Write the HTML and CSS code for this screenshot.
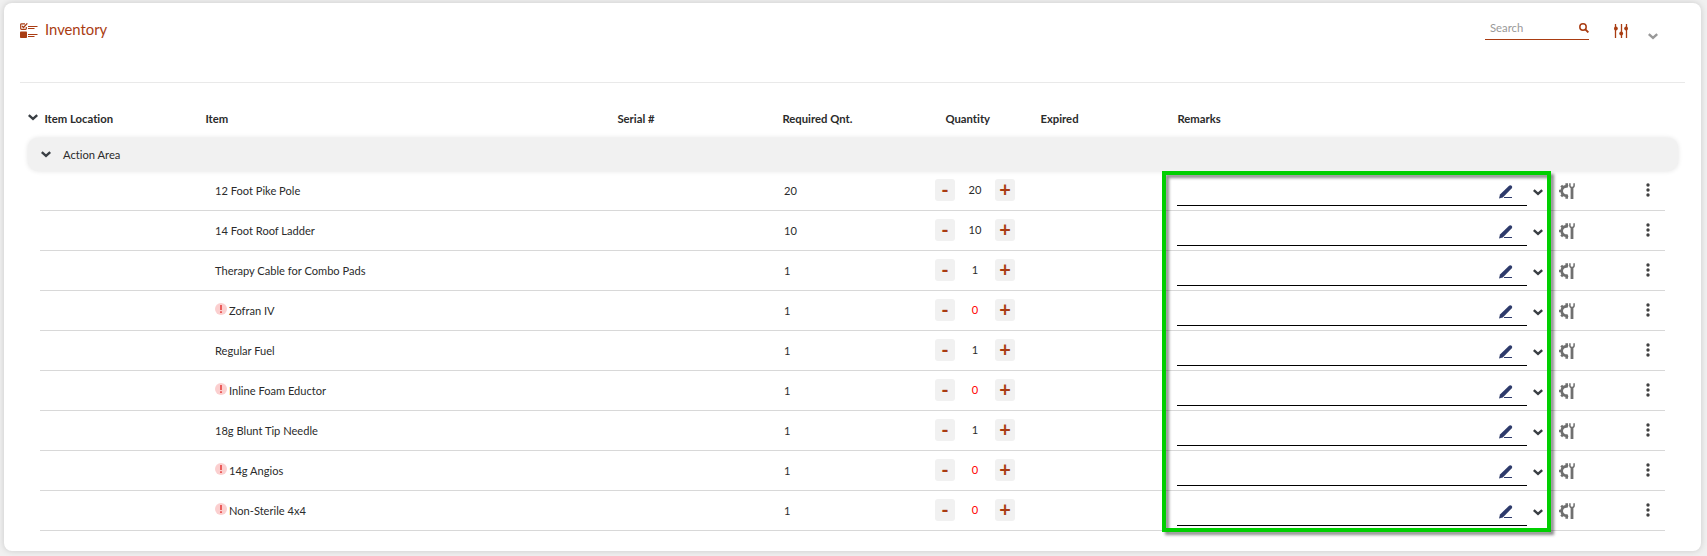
FILE: index.html
```html
<!DOCTYPE html>
<html lang="en">
<head>
<meta charset="utf-8">
<title>Inventory</title>
<link rel="stylesheet" href="styles.css">
</head>
<body>
<svg class="defs" aria-hidden="true">
  <symbol id="chevron" viewBox="0 0 10 7"><path d="M.8 1.200 5 5l4.200-3.800" fill="none" stroke="currentColor" stroke-width="2.400"/></symbol>
  <symbol id="pencil" viewBox="0 0 14 14"><path d="M0 13.500 1 9.600 9.800.9Q11.300-.4 12.600.8 13.800 2.100 12.600 3.400L3.800 12.400Z" fill="currentColor"/><path d="M5 12.500h8" stroke="currentColor" stroke-width="1"/></symbol>
  <symbol id="tools" viewBox="0 0 16 16"><path d="M9 3.600A4.700 4.700 0 1 0 9 12.400" fill="none" stroke="currentColor" stroke-width="2.700"/><path d="M7.700 .3v3M7.700 12.700v3M0 8h3M2.200 2.600l2 2M2.200 13.400l2-2" stroke="currentColor" stroke-width="2.600"/><path d="M10.900 .3v2.300q0 2 2.100 2t2.100-2V.3" fill="none" stroke="currentColor" stroke-width="1.500"/><path d="M13 4v12" stroke="currentColor" stroke-width="2.800"/></symbol>
  <symbol id="dots" viewBox="0 0 4 14"><circle cx="2" cy="2" r="1.700"/><circle cx="2" cy="7" r="1.700"/><circle cx="2" cy="12" r="1.700"/></symbol>
  <symbol id="alert" viewBox="0 0 12 12"><circle cx="6" cy="6" r="6" fill="#fbcfcf"/><path d="M6 2v5M6 8.200v1.800" stroke="#e8504f" stroke-width="1.800"/></symbol>
</svg>
<main class="panel">
  <header class="top">
    <svg class="logo" viewBox="0 0 18 15"><path d="M5 .8H1.500Q.7.800.7 1.500v4Q.7 6.300 1.500 6.300h4Q6.300 6.300 6.300 5.500V4" fill="none" stroke="currentColor" stroke-width="1.200"/><path d="M2 3l1.500 1.500L7.300.4" fill="none" stroke="currentColor" stroke-width="1.300"/><rect y="8.500" width="7" height="6.500" rx=".8" fill="currentColor"/><path d="M8 3.500h9.500M8 5.500h6.500M8 11.500h9.500M8 13.500h6.500" stroke="currentColor"/></svg>
    <h1 class="title">Inventory</h1>
    <div class="search"><span>Search</span><svg class="lens" viewBox="0 0 10 10"><circle cx="4" cy="4" r="3.200" fill="none" stroke="currentColor" stroke-width="1.500"/><path d="M6.300 6.300 9.400 9.400" stroke="currentColor" stroke-width="1.900"/></svg></div>
    <svg class="sliders" viewBox="0 0 14 14"><path d="M1.500 0v14M7.500 0v14M12.500 0v14" stroke="currentColor" stroke-width="1.300"/><circle cx="1.900" cy="4.500" r="1.900"/><circle cx="7.200" cy="9.500" r="1.900"/><circle cx="12.100" cy="4.500" r="1.900"/></svg>
    <svg class="chev collapse"><use href="#chevron"/></svg>
  </header>
  <div class="columns">
    <svg class="chev"><use href="#chevron"/></svg>
    <span>Item Location</span><span>Item</span><span>Serial #</span><span>Required Qnt.</span><span>Quantity</span><span>Expired</span><span>Remarks</span>
  </div>
  <div class="group"><svg class="chev"><use href="#chevron"/></svg><span>Action Area</span></div>
  <div class="rows" id="rows"></div>
  <div class="highlight"></div>
</main>
<script src="rows.js"></script>
</body>
</html>
```
FILE: styles.css
```css
* { box-sizing: border-box; }
body { margin: 0; height: 556px; padding: 3px 6px 5px 4px; overflow: hidden; background: #f0f0f0; font: 11.1px/16px Lato, sans-serif; font-variant-ligatures: none; color: #2b2b2b; }
svg { display: block; flex: none; }
.defs { position: absolute; width: 0; height: 0; }
.panel { position: relative; height: 548px; border-radius: 8px; background: #fff; box-shadow: 0 0 6px rgba(0,0,0,.16); }
.top { display: flex; align-items: flex-start; height: 80px; margin: 0 16px; border-bottom: 1px solid #e9e9e9; color: #a93c12; }
.logo { width: 18px; height: 15px; margin-top: 20px; }
.title { margin: 15px auto 0 7px; font-size: 14.8px; line-height: 22px; font-weight: 400; }
.search { display: flex; justify-content: space-between; width: 104px; height: 23px; margin-top: 14px; padding: 3px 0 0 5px; border-bottom: 1px solid #a93c12; color: #999; font-size: 11.3px; }
.lens { width: 10px; height: 10px; margin-top: 3px; color: #a93c12; }
.sliders { width: 14px; height: 14px; margin: 21px 0 0 25px; fill: currentColor; }
.chev { width: 10px; height: 7px; color: #3a3f44; }
.collapse { margin: 30px 27px 0 20px; color: #999; }
.columns { display: grid; grid-template-columns: 16px 161px 412px 165px 163px 95px 137px 1fr; height: 55px; padding: 28px 0 0 24px; font-weight: 700; font-size: 11.3px; }
.columns span { padding-left: .4px; }
.columns .chev { margin-top: 3px; }
.group { display: flex; align-items: center; height: 33px; margin: 0 23px 0 24px; padding-left: 13px; border-radius: 10px; background: #f1f1f1; box-shadow: 0 0 5px rgba(0,0,0,.12); }
.group span { margin-left: 12px; font-size: 11.2px; }
.row { display: grid; grid-template-columns: 175px 569px 151px 242px 350px 15px 33px 1fr; height: 40px; margin: 0 36px; border-bottom: 1px solid #d8d8d8; }
.name { grid-column: 2; display: flex; padding-top: 12px; }
.alert { width: 12px; height: 12px; margin-right: 2px; }
.required { padding-top: 12px; }
.quantity { display: grid; grid-template-columns: 20px 40px 20px; height: 20px; margin-top: 8px; line-height: 22px; text-align: center; }
.step { border-radius: 3px; background: #f1f1f1; color: #a93c12; font: 700 20px/20px Lato, sans-serif; }
.zero { color: #f00; }
.remark { height: 35px; padding: 14px 14px 0 0; border-bottom: 1px solid #000; }
.pencil { width: 14px; height: 14px; margin-left: auto; color: #2d3a6b; }
.row > .chev { margin: 18px 0 0 6px; }
.tools { width: 16px; height: 16px; margin: 12px 0 0 17px; color: #707070; }
.dots { width: 4px; height: 14px; margin: 12px 0 0 71px; fill: #404040; }
.highlight { position: absolute; left: 1158px; top: 168px; width: 389px; height: 361px; border: 4px solid #00cf00; filter: drop-shadow(3px 3px 1.5px rgba(0,0,0,.45)); }
```
FILE: rows.js
```js
const items = [
  ["12 Foot Pike Pole", 20, 20],
  ["14 Foot Roof Ladder", 10, 10],
  ["Therapy Cable for Combo Pads", 1, 1],
  ["Zofran IV", 1, 0],
  ["Regular Fuel", 1, 1],
  ["Inline Foam Eductor", 1, 0],
  ["18g Blunt Tip Needle", 1, 1],
  ["14g Angios", 1, 0],
  ["Non-Sterile 4x4", 1, 0]
];
const icon = (id, cls) => `<svg class="${cls}"><use href="#${id}"/></svg>`;
document.getElementById("rows").innerHTML = items.map(([name, required, quantity]) => `
  <div class="row">
    <div class="name">${quantity ? "" : icon("alert", "alert")}<span>${name}</span></div>
    <div class="required">${required}</div>
    <div class="quantity"><span class="step">-</span><span class="${quantity ? "" : "zero"}">${quantity}</span><span class="step">+</span></div>
    <div class="remark">${icon("pencil", "pencil")}</div>
    ${icon("chevron", "chev")}${icon("tools", "tools")}${icon("dots", "dots")}
  </div>`).join("");
```
